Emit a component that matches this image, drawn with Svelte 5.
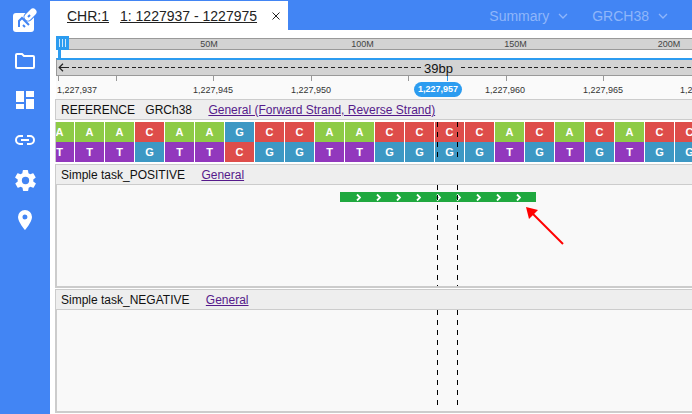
<script>
  const overview = [
    { label: '50M', x: 153 },
    { label: '100M', x: 306.500 },
    { label: '150M', x: 459.500 },
    { label: '200M', x: 613 }
  ];
  const ticks = [
    { x: 2 }, { x: 60 }, { x: 157 }, { x: 255 }, { x: 352 },
    { x: 391, active: true }, { x: 450 }, { x: 547 }, { x: 644 }
  ];
  const rulerLabels = [
    { text: '1,227,937', x: 1 },
    { text: '1,227,945', x: 137 },
    { text: '1,227,950', x: 235 },
    { text: '1,227,960', x: 429 },
    { text: '1,227,965', x: 527 },
    { text: '1,2', x: 624 }
  ];
  const bases = 'AAACAAGCCAACCCCACACACC'.split('');
  const complement = { A: 'T', T: 'A', C: 'G', G: 'C' };
  const chevrons = [0, 1, 2, 3, 4, 5, 6, 7, 8];
</script>

{#snippet guides()}
  <span class="guide one"></span>
  <span class="guide two"></span>
{/snippet}

<div class="app">
  <nav class="sidebar">
    <span class="nav-item">
      <svg viewBox="0 0 24 24" width="24" height="24">
        <rect x="0" y="5" width="21" height="19" rx="3" fill="#fff" />
        <path stroke="#4285f4" stroke-width="9" stroke-linecap="round" d="M15 9l4-4" />
        <path stroke="#fff" stroke-width="7" stroke-linecap="round" d="M15 9l5-5" />
        <path fill="none" stroke="#4285f4" stroke-width="2" d="M6 19v-6l3-3 7 7M12 19l-2-2M15 9l2-2" />
      </svg>
    </span>
    <span class="nav-item">
      <svg viewBox="0 0 20 17" width="20" height="17">
        <path fill="none" stroke="#fff" stroke-width="2" d="M1 3a1 1 0 0 1 1-1h5l2 2h9a1 1 0 0 1 1 1v10a1 1 0 0 1-1 1H2a1 1 0 0 1-1-1z" />
      </svg>
    </span>
    <span class="nav-item">
      <svg viewBox="0 0 18 18" width="18" height="18">
        <path fill="#fff" d="M0 0h8v11H0zM10 0h8v6h-8zM10 8h8v10h-8zM0 13h8v5H0z" />
      </svg>
    </span>
    <span class="nav-item">
      <svg viewBox="0 0 20 10" width="20" height="10">
        <path fill="none" stroke="#fff" stroke-width="2" d="M8 1H5a4 4 0 0 0 0 8h3M12 1h3a4 4 0 0 1 0 8h-3M6 5h8" />
      </svg>
    </span>
    <span class="nav-item">
      <svg viewBox="2 2 20 20" width="21" height="21">
        <path fill="#fff" d="M19.400 13a7.600 7.600 0 0 0 0-2l2.100-1.600a.5.5 0 0 0 .1-.6l-2-3.500a.5.5 0 0 0-.6-.2l-2.500 1a7.300 7.300 0 0 0-1.700-1l-.4-2.700a.5.5 0 0 0-.5-.4h-4a.5.5 0 0 0-.5.4l-.4 2.700a7.300 7.300 0 0 0-1.700 1l-2.500-1a.5.5 0 0 0-.6.2l-2 3.500a.5.5 0 0 0 .1.6L4.600 11a7.600 7.600 0 0 0 0 2l-2.100 1.600a.5.5 0 0 0-.1.6l2 3.500a.5.5 0 0 0 .6.2l2.500-1a7.300 7.300 0 0 0 1.700 1l.4 2.700a.5.5 0 0 0 .5.4h4a.5.5 0 0 0 .5-.4l.4-2.700a7.300 7.300 0 0 0 1.700-1l2.500 1a.5.5 0 0 0 .6-.2l2-3.500a.5.5 0 0 0-.1-.6zM12 15.500a3.500 3.500 0 1 1 0-7 3.500 3.500 0 0 1 0 7z" />
      </svg>
    </span>
    <span class="nav-item">
      <svg viewBox="0 0 14 20" width="14" height="20">
        <path fill="#fff" fill-rule="evenodd" d="M7 0a7 7 0 0 1 7 7c0 5-7 13-7 13S0 12 0 7a7 7 0 0 1 7-7zm0 4.500a2.500 2.500 0 1 0 0 5 2.500 2.500 0 0 0 0-5z" />
      </svg>
    </span>
  </nav>

  <main class="main">
    <header class="topbar">
      <div class="tab">
        <span class="tab-link">CHR:1</span>
        <span class="tab-link">1: 1227937 - 1227975</span>
        <svg class="close" viewBox="0 0 8 8" width="8" height="8">
          <path stroke="#222" stroke-width="1" d="M.5.5l7 7M7.500.5l-7 7" />
        </svg>
      </div>
      <div class="menus">
        <span class="menu">Summary
          <svg viewBox="0 0 10 6" width="10" height="6"><path fill="none" stroke="currentColor" stroke-width="1.300" d="M1 1l4 4 4-4" /></svg>
        </span>
        <span class="menu">GRCH38
          <svg viewBox="0 0 10 6" width="10" height="6"><path fill="none" stroke="currentColor" stroke-width="1.300" d="M1 1l4 4 4-4" /></svg>
        </span>
      </div>
    </header>

    <section class="browser">
      <div class="overview">
        {#each overview as m}
          <span class="overview-label" style="left: {m.x}px">{m.label}</span>
        {/each}
        <div class="handle"><i></i><i></i><i></i></div>
      </div>

      <div class="span-bar">
        <svg class="arrow" viewBox="0 0 7 9" width="7" height="9">
          <path fill="none" stroke="#222" stroke-width="1.200" d="M5 .8 1.200 4.500 5 8.200M1.500 4.500H7" />
        </svg>
        <span class="dash left"></span>
        <span class="span-text">39bp</span>
        <span class="dash"></span>
      </div>

      <div class="ruler">
        {#each ticks as t}
          <span class="tick" class:active={t.active} style="left: {t.x}px"></span>
        {/each}
        {#each rulerLabels as l}
          <span class="ruler-label" style="left: {l.x}px">{l.text}</span>
        {/each}
        <span class="pill">1,227,957</span>
      </div>

      <div class="tracks">
        <div class="track-head">
          <span>REFERENCE</span>
          <span class="genome">GRCh38</span>
          <a class="group" href="#ref">General (Forward Strand, Reverse Strand)</a>
        </div>

        <div class="sequence">
          <div class="seq-row">
            {#each bases as b}
              <span class="base {b}">{b}</span>
            {/each}
          </div>
          <div class="seq-row">
            {#each bases as b}
              <span class="base {complement[b]}">{complement[b]}</span>
            {/each}
          </div>
          {@render guides()}
        </div>

        <div class="track-head task">
          <span>Simple task_POSITIVE</span>
          <a class="group" href="#pos">General</a>
        </div>
        <div class="track-body">
          <div class="feature">
            {#each chevrons as c}
              <svg viewBox="0 0 5 7" width="5" height="7"><path fill="none" stroke="#fff" stroke-width="1.800" d="M1 .5l3 3-3 3" /></svg>
            {/each}
          </div>
          {@render guides()}
          <svg class="pointer" viewBox="0 0 40 40" width="40" height="40">
            <path stroke="#f00" stroke-width="2" d="M38 38 8 8" />
            <path fill="#f00" d="M1 1l12 3-9 9z" />
          </svg>
        </div>

        <div class="track-head task second">
          <span>Simple task_NEGATIVE</span>
          <a class="group" href="#neg">General</a>
        </div>
        <div class="track-body last">
          {@render guides()}
        </div>
      </div>
    </section>
  </main>
</div>

<style>
  :global(body) {
    margin: 0;
  }

  .app {
    display: flex;
    width: 692px;
    height: 414px;
    overflow: hidden;
    font-family: 'Liberation Sans', Arial, sans-serif;
    color: #222;
  }

  .sidebar {
    width: 50px;
    flex: none;
    background: #4285f4;
    display: flex;
    flex-direction: column;
    height: 100%;
  }

  .nav-item {
    height: 40px;
    flex: none;
    display: flex;
    align-items: center;
    justify-content: center;
  }

  .main {
    flex: 1;
    min-width: 0;
    background: #fff;
  }

  .topbar {
    height: 30px;
    background: #4285f4;
    display: flex;
    align-items: flex-end;
    justify-content: space-between;
  }

  .tab {
    width: 238px;
    height: 29px;
    box-sizing: border-box;
    background: #fff;
    display: flex;
    align-items: center;
    padding-left: 17px;
    font-size: 14px;
  }

  .tab-link {
    text-decoration: underline;
    margin-right: 11px;
  }

  .tab-link + .tab-link {
    margin-right: 15px;
  }

  .menus {
    display: flex;
    gap: 24px;
    margin-right: 24px;
    height: 29px;
    align-items: center;
  }

  .menu {
    color: #8fb6fa;
    font-size: 14px;
    display: flex;
    align-items: center;
    gap: 9px;
  }

  .browser {
    height: 384px;
    background: #fff;
    padding-top: 8px;
    box-sizing: border-box;
  }

  .overview {
    position: relative;
    height: 12px;
    margin-left: 6px;
    background: #d3d3d3;
    border-top: 1px solid #999;
    border-bottom: 1px solid #999;
    box-sizing: border-box;
  }

  .overview-label {
    position: absolute;
    top: 0;
    transform: translateX(-50%);
    font-size: 9px;
    line-height: 10px;
    color: #444;
  }

  .handle {
    position: absolute;
    left: 0;
    top: -3px;
    width: 13px;
    height: 14px;
    background: #2c9cf0;
    display: flex;
    align-items: center;
    justify-content: center;
    gap: 2px;
  }

  .handle::after {
    content: '';
    position: absolute;
    left: 2px;
    top: 14px;
    width: 3px;
    height: 8px;
    background: #2c9cf0;
  }

  .handle i {
    width: 1px;
    height: 8px;
    background: #cfe8fb;
  }

  .span-bar {
    margin: 8px 0 0 6px;
    height: 18px;
    box-sizing: border-box;
    background: #d3d3d3;
    border-top: 2px solid #2c9cf0;
    border-bottom: 1px solid #999;
    border-left: 1px solid #999;
    display: flex;
    align-items: center;
    color: #111;
  }

  .arrow {
    flex: none;
    margin-left: 1px;
  }

  .dash {
    flex: 1;
    height: 1px;
    background: repeating-linear-gradient(to right, #222 0 4px, transparent 4px 6.650px);
  }

  .dash.left {
    flex: 0 0 356px;
  }

  .span-text {
    font-size: 13px;
    line-height: 14px;
    margin: 2px 8px 0 3px;
  }

  .ruler {
    position: relative;
    height: 23px;
    margin-left: 6px;
    background: #fafafa;
    overflow: hidden;
  }

  .tick {
    position: absolute;
    top: 0;
    width: 1px;
    height: 5px;
    background: #999;
  }

  .tick.active {
    background: #2c9cf0;
  }

  .ruler-label {
    position: absolute;
    top: 9px;
    font-size: 9px;
    line-height: 11px;
    color: #333;
  }

  .pill {
    position: absolute;
    left: 358px;
    top: 6px;
    width: 48px;
    height: 15px;
    border-radius: 8px;
    background: #2c9cf0;
    color: #fff;
    font-size: 9px;
    font-weight: bold;
    line-height: 15px;
    text-align: center;
  }

  .tracks {
    margin-left: 5px;
  }

  .track-head {
    height: 21px;
    box-sizing: border-box;
    background: #eee;
    border-top: 1px solid #ccc;
    border-bottom: 1px solid #ccc;
    border-left: 1px solid #ccc;
    font-size: 12px;
    line-height: 20px;
    padding-left: 5px;
    color: #111;
    white-space: nowrap;
  }

  .genome {
    margin-left: 7px;
  }

  .group {
    margin-left: 13px;
    color: #551a8b;
  }

  .task {
    margin-top: 2px;
  }

  .second {
    margin-top: 1px;
  }

  .sequence {
    position: relative;
    margin-top: 2px;
    border-left: 1px solid #ccc;
    overflow: hidden;
  }

  .seq-row {
    display: flex;
    height: 20px;
    margin-left: -11px;
  }

  .base {
    flex: 0 0 29px;
    margin-right: 1px;
    color: #fff;
    font-size: 11px;
    font-weight: bold;
    line-height: 20px;
    text-align: center;
  }

  .A {
    background: #8ecb46;
  }

  .C {
    background: #de4d4a;
  }

  .G {
    background: #3d98c4;
  }

  .T {
    background: #9238bd;
  }

  .track-body {
    position: relative;
    height: 103px;
    box-sizing: border-box;
    background: #f9f9f9;
    border-left: 2px solid #ccc;
    border-bottom: 2px solid #ccc;
    overflow: hidden;
  }

  .feature {
    position: absolute;
    left: 283px;
    top: 7px;
    width: 196px;
    height: 10px;
    box-sizing: border-box;
    background: #1fa83f;
    display: flex;
    align-items: center;
    gap: 15px;
    padding-left: 16px;
  }

  .pointer {
    position: absolute;
    left: 468px;
    top: 21px;
  }

  .guide {
    position: absolute;
    top: 0;
    bottom: 0;
    width: 1px;
    background: repeating-linear-gradient(to bottom, #000 0 5px, transparent 5px 10px);
    pointer-events: none;
  }

  .last .guide {
    bottom: 5px;
  }

  .sequence .one {
    left: 381px;
  }

  .sequence .two {
    left: 401px;
  }

  .track-body .one {
    left: 380px;
  }

  .track-body .two {
    left: 400px;
  }
</style>
